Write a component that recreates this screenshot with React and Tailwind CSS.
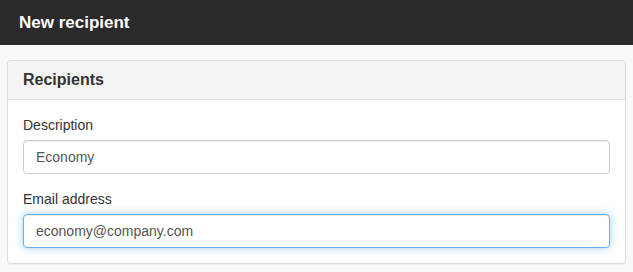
import React from 'react';

const App = () => {
    return (
        <div className="w-[633px] h-[272px] bg-[#f9f9f9] font-['Liberation_Sans',Arial,sans-serif] text-[#333] overflow-hidden">
            {/* Top bar */}
            <div className="h-[45px] bg-[#2a2a2a] flex items-center px-[19px] pt-[1px]">
                <span className="text-white text-[17px] font-semibold">New recipient</span>
            </div>

            {/* Panel */}
            <div className="mt-[15px] mx-[7px] bg-white border border-[#dddddd] rounded-[4px] shadow-[0_1px_1px_rgba(0,0,0,0.05)]">
                <div className="bg-[#f4f4f4] border-b border-[#dddddd] rounded-t-[3px] px-[15px] py-[10px]">
                    <h3 className="text-[16px] leading-[18px] font-bold text-[#333]">Recipients</h3>
                </div>
                <div className="p-[15px]">
                    <div className="mb-[15px]">
                        <label className="block text-[14px] leading-[20px] mb-[5px]">Description</label>
                        <input
                            type="text"
                            defaultValue="Economy"
                            className="block w-full h-[34px] px-[12px] text-[14px] text-[#555] bg-white border border-[#cccccc] rounded-[4px] shadow-[inset_0_1px_1px_rgba(0,0,0,0.075)] outline-none"
                        />
                    </div>
                    <div>
                        <label className="block text-[14px] leading-[20px] mb-[5px]">Email address</label>
                        <input
                            type="text"
                            defaultValue="economy@company.com"
                            className="block w-full h-[34px] px-[12px] text-[14px] text-[#555] bg-white border border-[#66afe9] rounded-[4px] shadow-[inset_0_1px_1px_rgba(0,0,0,0.075),0_0_8px_rgba(102,175,233,0.6)] outline-none"
                        />
                    </div>
                </div>
            </div>
        </div>
    );
};

export default App;
